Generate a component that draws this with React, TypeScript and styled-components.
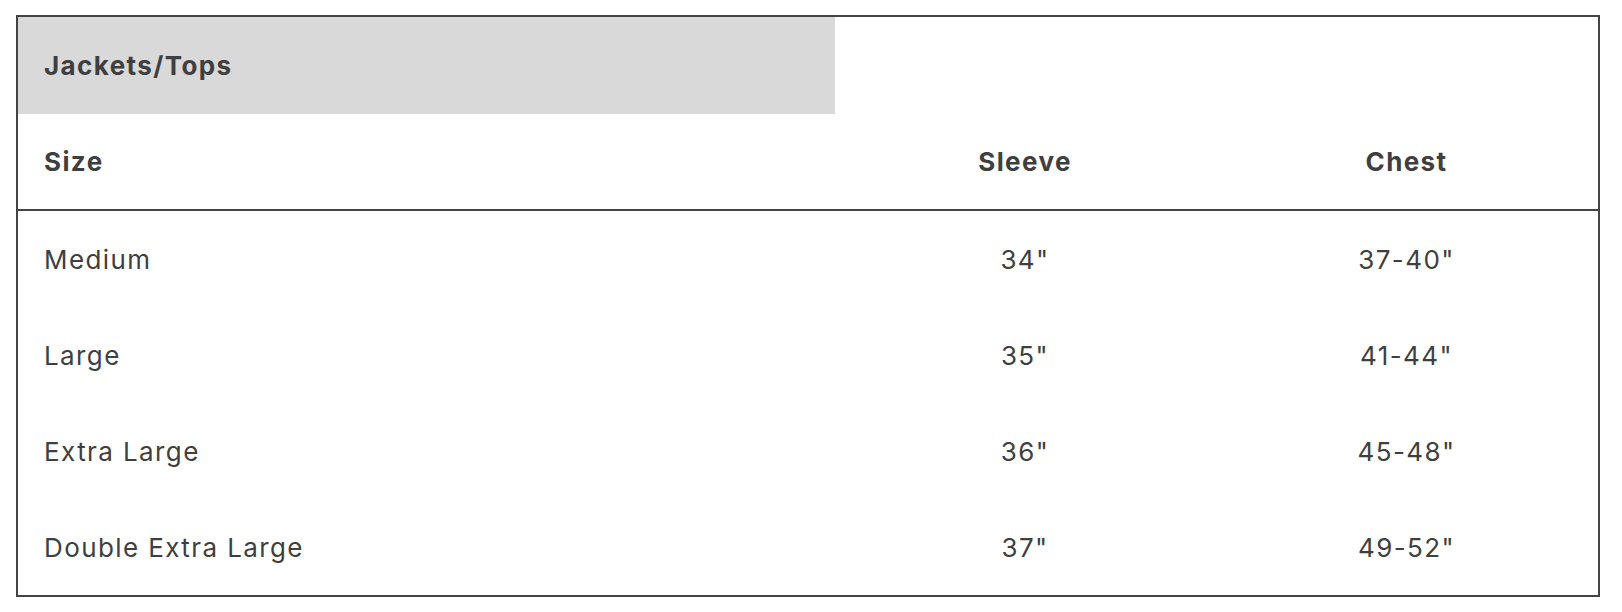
import { FC, ReactElement } from "react";
import styled, { createGlobalStyle } from "styled-components";

const GlobalStyle = createGlobalStyle`
    body {
        margin: 0;
        background: #ffffff;
        font-family: Inter, "Noto Sans", "Liberation Sans", sans-serif;
        color: #3f3f3f;
    }
`;

const Page = styled.div`
    padding: 15px 22px 0 16px;
`;

const Table = styled.table`
    width: 1584px;
    border: 2px solid #444444;
    border-collapse: separate;
    border-spacing: 0;
    table-layout: fixed;
    font-size: 26px;
    letter-spacing: 1.4px;
`;

const TitleCell = styled.th`
    height: 97px;
    padding: 0 0 0 26px;
    background: #d9d9d9;
    text-align: left;
    font-weight: 700;
`;

const HeadCell = styled.th<{ $align: "left" | "center" }>`
    height: 95px;
    padding: ${({ $align }) => ($align === "left" ? "0 0 0 26px" : "0")};
    border-bottom: 2px solid #444444;
    text-align: ${({ $align }) => $align};
    font-weight: 700;
`;

const BodyCell = styled.td<{ $align: "left" | "center" }>`
    height: 96px;
    padding: ${({ $align }) => ($align === "left" ? "0 0 0 26px" : "0")};
    text-align: ${({ $align }) => $align};
    font-weight: 400;
`;

type SizeRow = {
    size: string,
    sleeve: string,
    chest: string
}

const rows: SizeRow[] = [
    { size: "Medium", sleeve: "34\"", chest: "37-40\"" },
    { size: "Large", sleeve: "35\"", chest: "41-44\"" },
    { size: "Extra Large", sleeve: "36\"", chest: "45-48\"" },
    { size: "Double Extra Large", sleeve: "37\"", chest: "49-52\"" },
];

const App: FC = (): ReactElement => {
    return (
        <Page>
            <GlobalStyle />
            <Table>
                <colgroup>
                    <col style={{ width: 817 }} />
                    <col style={{ width: 380 }} />
                    <col style={{ width: 383 }} />
                </colgroup>
                <thead>
                    <tr>
                        <TitleCell>Jackets/Tops</TitleCell>
                        <th />
                        <th />
                    </tr>
                    <tr>
                        <HeadCell $align="left">Size</HeadCell>
                        <HeadCell $align="center">Sleeve</HeadCell>
                        <HeadCell $align="center">Chest</HeadCell>
                    </tr>
                </thead>
                <tbody>
                    {rows.map((row) => (
                        <tr key={row.size}>
                            <BodyCell $align="left">{row.size}</BodyCell>
                            <BodyCell $align="center">{row.sleeve}</BodyCell>
                            <BodyCell $align="center">{row.chest}</BodyCell>
                        </tr>
                    ))}
                </tbody>
            </Table>
        </Page>
    );
}

export default App;
